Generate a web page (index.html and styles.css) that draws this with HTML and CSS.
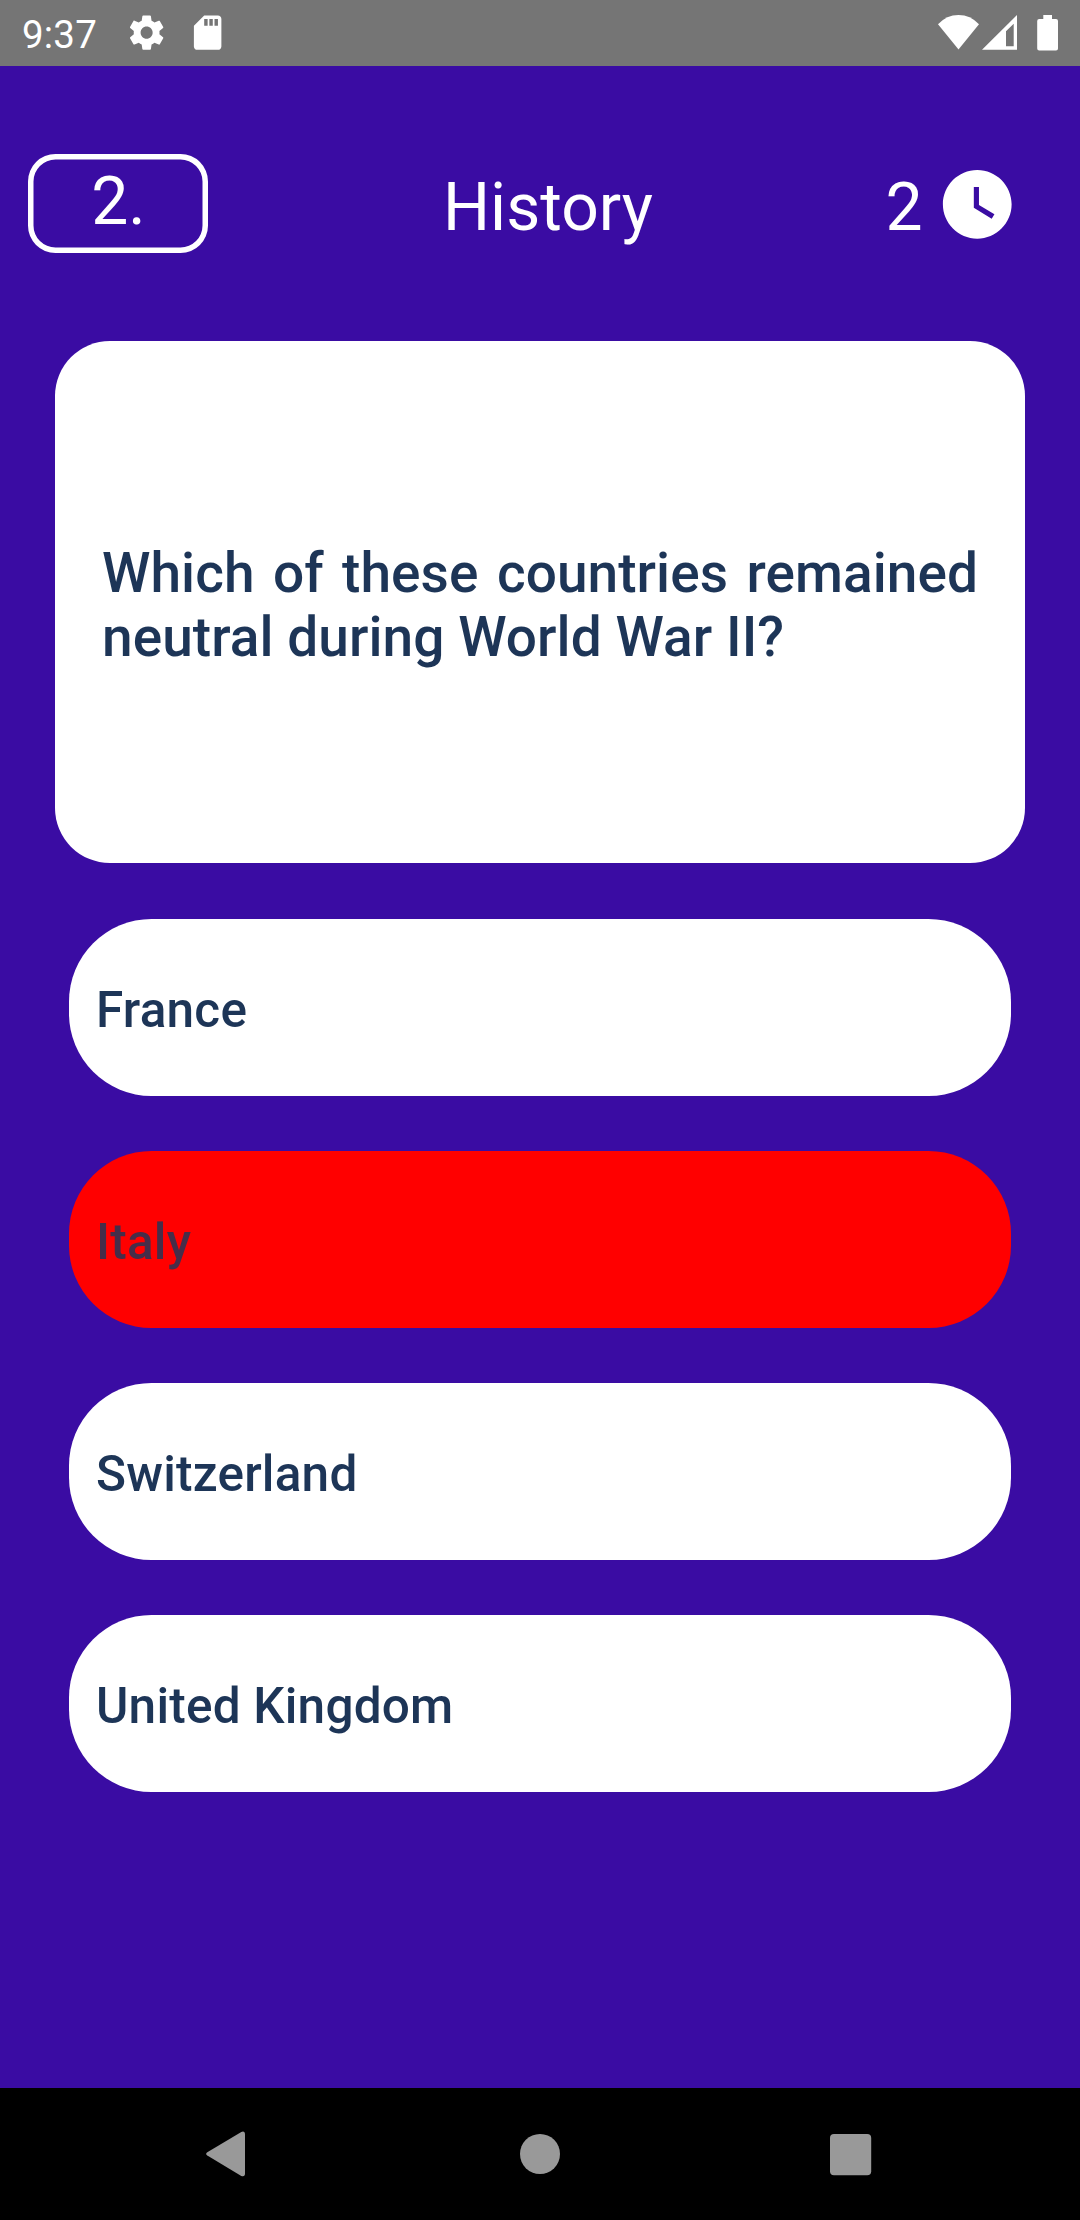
FILE: index.html
```html
<!DOCTYPE html>
<html lang="en">
<head>
<meta charset="utf-8">
<title>Quiz</title>
<link rel="stylesheet" href="styles.css">
</head>
<body>
<div class="screen">
  <header class="status">
    <span class="time">9:37</span>
    <svg class="gear" viewBox="0 0 24 24"><path d="M19.43 12.98c.04-.32.07-.64.07-.98s-.03-.66-.07-.98l2.11-1.65c.19-.15.24-.42.12-.64l-2-3.46c-.12-.22-.39-.3-.61-.22l-2.49 1c-.52-.4-1.08-.73-1.69-.98l-.38-2.65C14.46 2.18 14.25 2 14 2h-4c-.25 0-.46.18-.49.42l-.38 2.65c-.61.25-1.17.59-1.69.98l-2.49-1c-.23-.09-.49 0-.61.22l-2 3.46c-.13.22-.07.49.12.64l2.11 1.65c-.04.32-.07.65-.07.98s.03.66.07.98l-2.11 1.65c-.19.15-.24.42-.12.64l2 3.46c.12.22.39.3.61.22l2.49-1c.52.4 1.08.73 1.69.98l.38 2.65c.03.24.24.42.49.42h4c.25 0 .46-.18.49-.42l.38-2.65c.61-.25 1.17-.59 1.69-.98l2.49 1c.23.09.49 0 .61-.22l2-3.46c.12-.22.07-.49-.12-.64l-2.11-1.65zM12 15.5c-1.93 0-3.5-1.57-3.5-3.5s1.57-3.5 3.5-3.5 3.5 1.57 3.5 3.5-1.57 3.5-3.5 3.5z"/></svg>
    <svg class="sd" viewBox="0 0 24 24"><path d="M18 2h-8L4.02 8 4 20c0 1.1.9 2 2 2h12c1.1 0 2-.9 2-2V4c0-1.1-.9-2-2-2zm-6 6h-2V4h2v4zm3 0h-2V4h2v4zm3 0h-2V4h2v4z"/></svg>
    <svg class="system" viewBox="0 0 122 36"><path d="M0 9.3Q8.500 0 20.500 0T41 9.300L20.500 34.500Z"/><path fill-rule="evenodd" d="M44 34.700L79 0V34.700ZM68 31.200H75.700V8.700L68 16.300Z"/><path d="M105.300 0h8.700v4h4q2 0 2 2v27.500q0 2-2 2h-16.800q-2 0-2-2V6q0-2 2-2h4.100Z"/></svg>
  </header>
  <main class="quiz">
    <div class="top">
      <div class="number">2.</div>
      <h1 class="category">History</h1>
      <div class="timer">
        <span>2</span>
        <svg class="clock" viewBox="0 0 24 24"><path d="M12 2C6.500 2 2 6.500 2 12s4.500 10 10 10 10-4.500 10-10S17.500 2 12 2zm4.200 14.200L11 13V7h1.500v5.200l4.500 2.700-.8 1.300z"/></svg>
      </div>
    </div>
    <section class="question"><p>Which of these countries remained neutral during World War II?</p></section>
    <div class="answers">
      <button class="answer">France</button>
      <button class="answer wrong">Italy</button>
      <button class="answer">Switzerland</button>
      <button class="answer">United Kingdom</button>
    </div>
  </main>
  <nav class="nav">
    <svg viewBox="0 0 48 48"><path d="M5.300 22.300L39.300 1.900Q43 .6 43 4.500V43.500Q43 47.200 39.300 46L5.300 25.600Q3 24 5.300 22.300Z"/></svg>
    <svg viewBox="0 0 48 48"><circle cx="26" cy="24" r="20"/></svg>
    <svg viewBox="0 0 48 48"><rect x="4" y="4" width="41.200" height="41.300" rx="4"/></svg>
  </nav>
</div>
</body>
</html>
```
FILE: styles.css
```css
body {
  margin: 0;
  font-family: Roboto, "Liberation Sans", sans-serif;
}

.screen {
  display: flex;
  flex-direction: column;
  width: 1080px;
  height: 2220px;
  background: #3a0ca3;
  overflow: hidden;
}

svg {
  display: block;
  flex: none;
  fill: currentColor;
}

.status {
  display: flex;
  align-items: center;
  box-sizing: border-box;
  height: 66px;
  padding: 0 20px 0 22px;
  background: #757575;
  color: #fff;
}

.time {
  width: 104px;
  padding-top: 3px;
  font-size: 38.5px;
  line-height: 45px;
  letter-spacing: 0.2px;
}

.gear,
.sd {
  width: 41.25px;
  height: 41.25px;
}

.sd {
  margin-left: 19.5px;
}

.system {
  width: 122px;
  height: 36px;
  margin-left: auto;
}

.quiz {
  flex: 1;
  padding-top: 88px;
}

.top {
  display: grid;
  grid-template-columns: 180px 1fr 180px;
  height: 99px;
  padding: 0 62px 0 28px;
  color: #fff;
  font-size: 66px;
  line-height: 77px;
}

.number {
  box-sizing: border-box;
  height: 99px;
  padding: 9px 0 0 1px;
  border-radius: 27.5px;
  box-shadow: inset 0 0 0 5.5px #fff;
  text-align: center;
}

.category {
  margin: 0;
  padding: 15px 0 0 50px;
  font-size: inherit;
  font-weight: 400;
  text-align: center;
}

.timer {
  display: flex;
  justify-content: flex-end;
  gap: 13px;
}

.timer span {
  padding-top: 15px;
}

.clock {
  width: 82.5px;
  height: 82.5px;
  margin-top: 9.2px;
}

.question {
  display: flex;
  align-items: center;
  box-sizing: border-box;
  height: 522px;
  margin: 88px 55px 56px;
  padding: 0 47px;
  border-radius: 55px;
  background: #fff;
  color: #1d3557;
}

.question p {
  margin: 0;
  padding-top: 6px;
  font-size: 55px;
  font-weight: 500;
  line-height: 64px;
  letter-spacing: 0.06px;
  text-align: justify;
}

.answers {
  display: flex;
  flex-direction: column;
  gap: 55px;
  padding: 0 69px;
}

.answer {
  height: 177px;
  padding: 5px 27px 0;
  border: 0;
  border-radius: 82.5px;
  background: #fff;
  color: #1d3557;
  font: 500 49.5px/58px Roboto, "Liberation Sans", sans-serif;
  letter-spacing: 0.22px;
  text-align: left;
}

.answer.wrong {
  background: #f00;
  color: #462d49;
}

.nav {
  display: flex;
  justify-content: space-between;
  align-items: center;
  box-sizing: border-box;
  height: 132px;
  padding: 0 206px 0 202px;
  background: #000;
  color: #999;
}

.nav svg {
  width: 48px;
  height: 48px;
}
```
